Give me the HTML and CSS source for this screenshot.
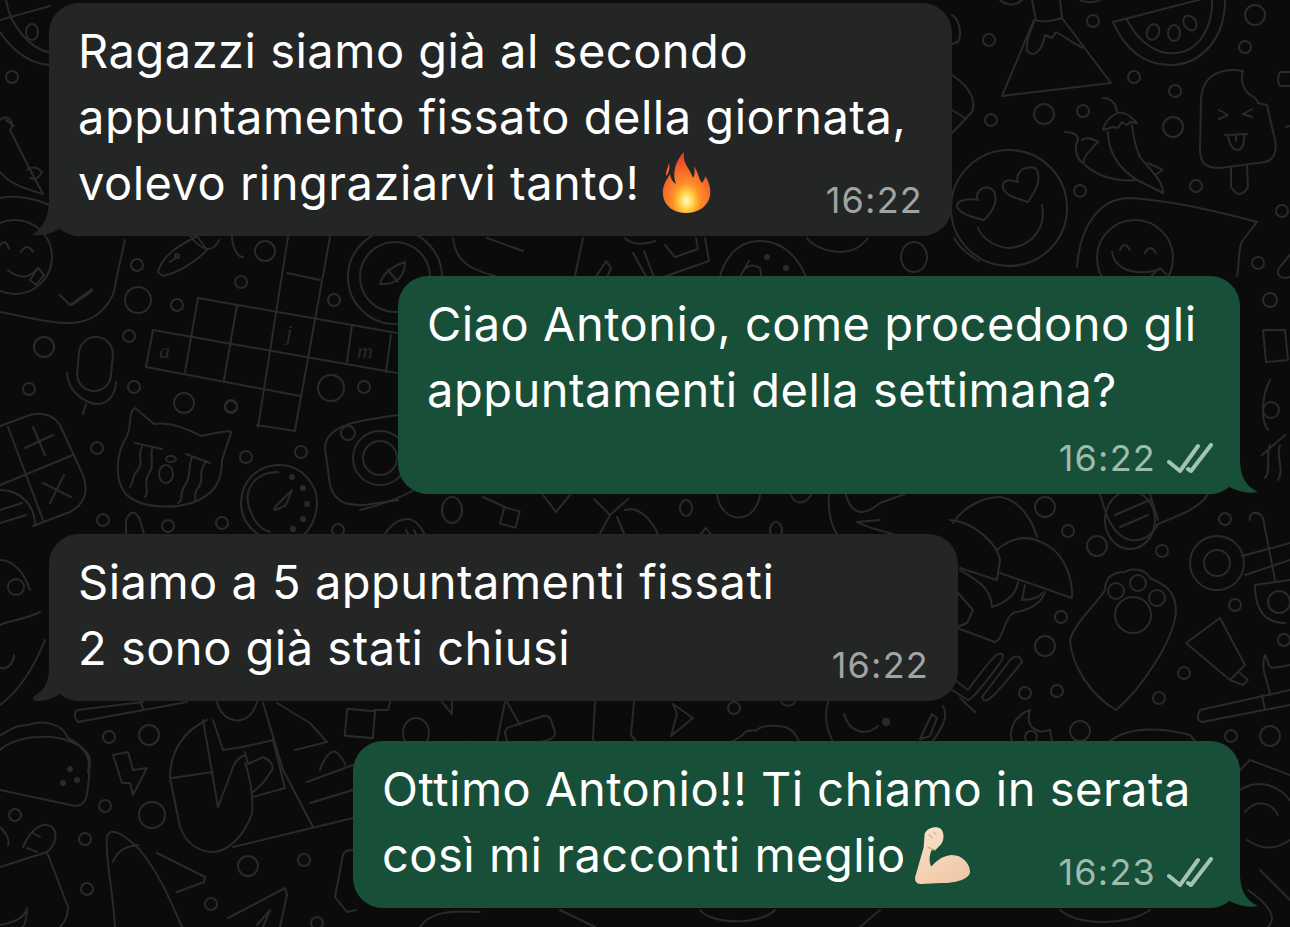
FILE: index.html
```html
<!DOCTYPE html>
<html lang="it">
<head>
    <meta charset="UTF-8">
    <meta name="viewport" content="width=device-width, initial-scale=1.0">
    <title>Chat</title>
    <link rel="stylesheet" href="styles.css">
</head>
<body>
    <svg class="wallpaper" viewBox="0 0 1290 927" aria-hidden="true">
        <!-- left edge, top -->
        <path d="M0 20 L50 6 M0 32 C15 55 35 65 52 65 M6 0 C10 25 30 50 52 53"/>
        <ellipse cx="32" cy="32" rx="6" ry="8"/>
        <circle cx="12" cy="77" r="6"/>
        <path d="M0 120 C10 112 15 125 10 130 C20 150 30 170 43 194 C30 190 10 185 0 172 M14 126 L6 120 M0 198 C15 195 35 198 49 205"/>
        <path d="M27 170 C35 164 40 170 42 172 C38 180 34 180 30 178"/>
        <!-- smiley with tongue -->
        <circle cx="15" cy="257" r="37"/>
        <path d="M0 245 Q6 238 9 249 M21 252 Q27 242 33 252 M8 270 C20 280 30 278 38 268 M30 280 L38 268 L44 275 L36 285 Z"/>
        <!-- big bubble with ticks -->
        <path d="M0 312 C30 318 50 323 70 323 C100 322 115 300 116 280 L125 240"/>
        <path d="M60 295 L70 305 L92 289 M72 305 L92 291"/>
        <!-- pen -->
        <path d="M158 272 C162 255 180 245 197 236 L207 250 C195 262 180 272 163 276 Z M170 262 L179 256 M190 236 C205 255 215 250 219 240 M232 237 C233 250 238 257 243 257"/>
        <circle cx="177" cy="256" r="2"/>
        <!-- crossword -->
        <path d="M198 298 L397 333 M153 330 L397 373 M146 367 L300 396 M153 330 L146 367 M198 298 L185 372 M237 305 L224 380 M288 237 L258 427 M330 237 L295 430 M287 273 L320 280 M257 425 L295 431 M352 325 L347 362 M391 335 L386 372"/>
        <text class="doodle-letter" x="159" y="358">a</text>
        <text class="doodle-letter" x="286" y="340">j</text>
        <text class="doodle-letter" x="357" y="358">m</text>
        <!-- mic -->
        <rect x="78" y="337" width="34" height="54" rx="17" transform="rotate(5 95 364)"/>
        <path d="M67 373 C68 395 90 405 100 404 C110 402 116 392 116 382 M86 404 L83 414"/>
        <!-- circles, left -->
        <circle cx="137" cy="265" r="6"/><circle cx="138" cy="300" r="13"/><circle cx="177" cy="305" r="6"/>
        <circle cx="129" cy="336" r="6"/><circle cx="44" cy="347" r="10"/><circle cx="29" cy="389" r="6"/>
        <circle cx="134" cy="387" r="6"/><circle cx="184" cy="403" r="10"/><circle cx="231" cy="407" r="6"/>
        <circle cx="241" cy="282" r="6"/><circle cx="265" cy="251" r="10"/><circle cx="334" cy="300" r="6"/>
        <circle cx="331" cy="388" r="13"/><circle cx="364" cy="387" r="6"/>
        <!-- compass -->
        <circle cx="395" cy="277" r="47"/><circle cx="395" cy="277" r="35"/>
        <path d="M380 284 C383 272 395 265 405 262 C405 275 398 285 380 284 Z M388 270 L398 282"/>
        <!-- calculator -->
        <path d="M0 426 L30 415 Q50 410 60 425 L83 475 Q92 500 70 512 L33 526 M8 427 L43 520 M0 485 L73 455 M25 448 L53 435 M33 427 L45 455 M43 483 L71 497 M64 475 L50 503 M0 510 L22 503 M0 523 L26 515 M0 490 C20 490 35 505 35 525"/>
        <!-- cat -->
        <path d="M135 408 C128 412 132 425 127 436 C115 455 115 480 125 493 C140 510 175 508 192 503 C212 495 222 485 222 460 L231 433 C232 430 225 431 201 436 C180 425 165 422 154 424 Z"/>
        <path d="M135 443 L162 449 M142 447 C136 458 146 462 136 472 C130 482 135 480 130 487 M152 449 C150 462 155 465 148 475 C143 485 150 490 145 497 M186 454 L210 463 M192 457 C187 470 192 475 185 485 C178 495 185 498 178 503 M205 463 C197 475 205 480 198 488 C192 495 198 498 194 502"/>
        <ellipse cx="166" cy="474" rx="7" ry="9"/>
        <ellipse cx="171" cy="459" rx="5" ry="3"/>
        <!-- gauge -->
        <path d="M278 472 C255 472 242 490 250 510 C255 525 262 530 270 532"/>
        <path d="M262 537 C248 528 241 518 241 502 C242 480 258 465 280 465 C302 465 317 485 317 502 C317 518 310 530 302 536"/>
        <path d="M292 490 L276 506 Q272 512 278 509 L286 505 Z"/>
        <circle class="doodle-dot" cx="292" cy="477" r="3"/><circle class="doodle-dot" cx="303" cy="488" r="3"/>
        <circle class="doodle-dot" cx="307" cy="504" r="3"/><circle class="doodle-dot" cx="303" cy="519" r="3"/><circle class="doodle-dot" cx="293" cy="529" r="3"/>
        <circle cx="97" cy="448" r="6"/><circle cx="246" cy="457" r="6"/><circle cx="301" cy="452" r="6"/>
        <circle cx="103" cy="520" r="6"/><circle cx="168" cy="526" r="6"/><circle cx="222" cy="523" r="6"/>
        <circle cx="338" cy="530" r="6"/><circle cx="231" cy="406" r="6"/>
        <path d="M126 534 L126 520 Q133 505 140 520 L144 534"/>
        <!-- camera -->
        <path d="M398 415 C360 420 325 425 325 448 L330 485 C335 505 350 505 365 505 L398 500"/>
        <circle cx="380" cy="458" r="27"/><circle cx="380" cy="458" r="17"/><circle cx="348" cy="433" r="7"/>
        <!-- left edge, middle -->
        <circle cx="16" cy="587" r="8"/>
        <path d="M0 560 C15 560 25 575 30 590 M0 625 C10 620 25 620 40 612 M45 640 C35 665 20 690 0 705 M0 668 C10 670 14 660 14 655"/>
        <!-- taco -->
        <path d="M0 790 L75 806 C88 806 88 795 90 760 C88 745 60 735 40 737 C20 737 5 745 0 750"/>
        <path d="M0 735 C5 735 10 725 28 725 C40 720 62 722 68 738 C82 745 92 755 88 772"/>
        <circle class="doodle-dot" cx="70" cy="769" r="3"/><circle class="doodle-dot" cx="63" cy="783" r="3"/><circle class="doodle-dot" cx="77" cy="780" r="3"/>
        <!-- bolt -->
        <path d="M113 755 L128 752 L133 770 L147 768 L133 795 L130 783 L122 783 Z"/>
        <circle cx="109" cy="737" r="6"/><circle cx="149" cy="735" r="10"/><circle cx="105" cy="806" r="6"/>
        <circle cx="152" cy="815" r="13"/><circle cx="15" cy="815" r="6"/><circle cx="85" cy="839" r="6"/>
        <circle cx="87" cy="889" r="6"/><circle cx="211" cy="904" r="6"/><circle cx="248" cy="866" r="10"/>
        <circle cx="304" cy="860" r="6"/><circle cx="317" cy="923" r="6"/>
        <!-- person with phone -->
        <path d="M187 702 L78 722 Q72 715 77 710 L143 702 M140 702 L143 708"/>
        <path d="M217 702 C222 725 250 728 257 702"/>
        <path d="M207 720 C185 730 170 750 170 778 L180 827 C187 845 200 852 213 852 C228 852 245 835 252 813 C254 795 248 770 245 763"/>
        <path d="M172 778 L213 772 M203 720 L218 807 L232 770 C234 762 238 758 245 755 M213 720 L223 750 L243 747 L273 740 L285 788 L253 797"/>
        <path d="M245 752 L248 764 L263 757 C270 760 274 765 272 770 L263 783 L253 792"/>
        <path d="M263 703 L283 770 L313 827 M277 703 L310 723 L327 742 L295 750 M233 847 L353 818 M307 782 L353 765 M310 803 L353 790 M320 770 C325 755 332 750 336 752 C340 755 345 762 345 765"/>
        <rect x="346" y="710" width="28" height="27" transform="rotate(5 360 723)"/>
        <path d="M374 710 L388 710 L390 702"/>
        <!-- notebook and loaf -->
        <path d="M0 867 L47 852 L68 907 C68 915 65 922 60 927 M23 847 C30 830 43 820 52 827 C58 833 56 845 47 852 M27 848 L37 852 M33 833 L40 837 M0 827 C8 835 10 840 8 845"/>
        <path d="M0 925 C15 922 25 918 27 908 C27 915 25 927 22 927"/>
        <!-- rocket -->
        <path d="M107 837 C110 825 125 835 140 850 C160 875 170 900 182 927 M107 837 C105 860 112 880 115 927 M113 862 C117 850 128 846 138 845 M157 853 L205 877 L204 882 L177 892"/>
        <path d="M228 918 L285 888 L287 895 L280 927 M257 925 L270 910 L263 927"/>
        <!-- comment bubble -->
        <path d="M353 850 C345 850 343 852 342 860 L335 897 L347 912 L356 910"/>
        <!-- gap under first bubble -->
        <path d="M453 238 C456 268 480 272 510 280 M487 238 L523 251 M583 238 L575 276 M594 280 L606 261 L611 268 L606 280"/>
        <path d="M625 238 C632 245 644 245 655 241 M633 253 L648 280 M644 251 L655 280 M655 280 L709 261 L705 238 M665 245 L675 257 L698 249 L696 238"/>
        <path d="M719 280 C725 255 740 241 759 241 C785 241 800 260 807 280 M740 280 C742 268 750 262 760 268 L762 280 M749 261 L738 280"/>
        <circle class="doodle-dot" cx="767" cy="257" r="3"/><circle class="doodle-dot" cx="786" cy="268" r="3"/>
        <path d="M807 238 C815 250 850 262 868 238"/>
        <ellipse cx="914" cy="257" rx="13" ry="15"/>
        <path d="M954 238 C960 248 970 256 979 261"/>
        <!-- gap under second bubble -->
        <path d="M360 510 C380 505 400 498 414 490"/>
        <ellipse cx="452" cy="510" rx="10" ry="13"/>
        <path d="M483 497 L507 508"/>
        <rect x="502" y="509" width="16" height="17" transform="rotate(15 510 517)"/>
        <path d="M543 495 L556 512 L570 495 M594 499 L610 515 L628 499 M610 515 L597 539 L590 548 M617 517 L630 548 M625 510 C640 505 659 525 661 548"/>
        <path d="M378 548 C385 530 395 519 408 519 C415 519 422 528 425 535 M406 530 L410 538 M414 530 L418 538"/>
        <path d="M476 548 C478 538 490 538 493 548 M530 548 L540 544 M544 548 C546 540 558 540 560 548 M688 548 L706 528 L713 537 L717 548"/>
        <ellipse cx="686" cy="508" rx="6" ry="8"/>
        <path d="M717 495 C722 525 755 525 760 495"/>
        <ellipse cx="776" cy="530" rx="6" ry="8"/>
        <path d="M791 495 C795 505 805 505 811 495"/>
        <path d="M829 495 C827 520 835 535 846 546 M846 495 C850 510 860 520 880 503 L905 494 M880 520 L857 522 C870 530 905 535 907 540 L895 546"/>
        <!-- gap under third bubble -->
        <ellipse cx="416" cy="733" rx="13" ry="15"/>
        <path d="M442 702 L452 714 L452 702 M505 702 L495 751 M507 702 L520 725 M546 743 L552 751 M454 751 C462 742 470 738 480 745 C490 745 497 748 500 751"/>
        <rect x="506" y="721" width="48" height="24" rx="6" transform="rotate(-18 530 733)"/>
        <path d="M595 702 L593 739 L599 751 M634 702 L631 735 L644 751 M673 704 L693 718 L671 736 L677 714 Z"/>
        <circle cx="734" cy="708" r="6"/>
        <path d="M781 702 C785 707 792 707 795 702"/>
        <path d="M720 751 C730 740 742 738 744 733 C748 728 755 732 757 730 C762 725 775 725 785 727 C795 730 801 742 801 751"/>
        <path d="M828 702 C823 720 828 738 840 751 M844 714 C850 735 868 735 878 726"/>
        <circle class="doodle-dot" cx="886" cy="722" r="4"/>
        <path d="M932 714 L920 739 L930 736 L937 718 Z M943 706 C948 715 945 725 930 745 C925 750 915 751 905 751 M960 698 L975 712"/>
        <!-- bottom strip -->
        <path d="M420 927 C430 912 450 910 480 912 M560 910 L595 927 M700 910 C712 925 760 925 775 910 M880 910 L860 927 M1060 910 C1080 927 1130 925 1150 910"/>
        <!-- mountain -->
        <path d="M1002 96 L1111 83 L1062 18 C1050 22 1040 22 1034 20 Z M1032 0 L1036 20 M1060 0 L1062 18"/>
        <path d="M1034 22 C1028 35 1025 48 1028 52 C1035 58 1042 50 1045 35 L1052 38 L1056 32 L1066 38 C1075 45 1085 48 1082 48"/>
        <!-- watermelon -->
        <path d="M1113 22 L1210 -3 M1113 22 C1125 50 1145 65 1170 65 C1200 65 1225 40 1225 0 M1127 20 C1140 45 1160 55 1175 53 C1200 52 1213 25 1212 0"/>
        <ellipse cx="1153" cy="32" rx="6" ry="8" transform="rotate(20 1153 32)"/>
        <ellipse cx="1174" cy="33" rx="6" ry="8"/>
        <ellipse cx="1190" cy="23" rx="6" ry="8" transform="rotate(-35 1190 23)"/>
        <circle cx="989" cy="40" r="6"/><circle cx="1093" cy="21" r="6"/><circle cx="1134" cy="77" r="6"/>
        <circle cx="1175" cy="91" r="6"/><circle cx="1255" cy="15" r="10"/><circle cx="1245" cy="47" r="6"/>
        <circle cx="991" cy="120" r="6"/><circle cx="1044" cy="114" r="10"/><circle cx="1083" cy="111" r="6"/>
        <circle cx="1173" cy="127" r="10"/><circle cx="1196" cy="186" r="6"/><circle cx="1080" cy="191" r="6"/>
        <circle cx="1282" cy="211" r="6"/><circle cx="1258" cy="263" r="6"/>
        <path d="M952 15 C960 20 962 35 958 42 L952 44 M952 75 C975 90 975 105 972 112 L952 133 M952 110 L965 118"/>
        <path d="M1000 0 C1005 5 1015 7 1022 0 M1080 0 C1085 3 1095 3 1100 0"/>
        <!-- popsicle -->
        <path d="M1243 71 C1225 68 1202 72 1201 100 L1200 150 C1200 165 1208 168 1220 168 L1265 162 C1275 160 1277 150 1275 140 L1267 105 L1258 103 C1256 95 1250 97 1247 92 C1241 85 1241 78 1243 71 Z"/>
        <path d="M1231 168 L1231 187 Q1240 201 1248 187 L1247 166 M1219 110 L1228 115 L1219 119 M1252 109 L1243 114 L1252 117 M1225 135 L1247 134 M1228 135 Q1230 150 1238 150 Q1245 148 1244 135 M1236 136 L1236 141"/>
        <path d="M1290 72 L1280 72 Q1276 80 1280 86 L1290 86 M1290 126 L1286 127"/>
        <!-- face with hearts -->
        <circle cx="1009" cy="208" r="58"/>
        <path d="M1038 174 C1038 168 1033 166 1026 168 C1018 170 1016 178 1018 182 C1006 178 1002 182 1003 188 C1005 195 1015 198 1028 202 C1036 190 1040 182 1038 174 Z"/>
        <path d="M995 195 C995 188 985 185 980 190 C975 195 977 198 978 200 C968 198 957 200 957 206 C958 212 970 217 984 220 C992 212 997 203 995 195 Z"/>
        <path d="M1042 205 C1046 225 1035 245 1010 248 C995 248 982 238 978 228"/>
        <!-- chili -->
        <path d="M1103 98 C1112 98 1117 105 1117 113 C1108 118 1104 124 1103 130 L1113 127 L1118 128 L1122 122 L1127 125 L1130 122 L1137 123 C1130 115 1123 111 1117 113"/>
        <path d="M1108 132 C1108 150 1117 167 1137 180 L1163 193 C1163 180 1150 170 1140 157 C1135 147 1133 133 1132 125 M1148 163 L1163 170 L1155 175"/>
        <path d="M1065 132 C1075 132 1078 135 1078 140 C1073 150 1078 160 1083 163 C1085 153 1090 152 1093 147 L1098 142 C1090 137 1085 138 1082 140 M1083 163 C1097 177 1117 182 1137 180"/>
        <!-- smile blob -->
        <path d="M1077 267 C1080 225 1100 198 1130 198 C1170 200 1220 212 1257 222 L1243 240 C1238 245 1240 260 1237 276"/>
        <circle cx="1135" cy="258" r="38"/>
        <path d="M1120 250 Q1124 240 1130 250 M1145 253 Q1150 243 1156 253 M1112 252 C1115 270 1135 276 1158 270 M1152 275 L1160 268 L1166 274"/>
        <path d="M1279 268 L1290 255 M1279 268 C1275 275 1282 280 1290 277"/>
        <!-- right edge, middle -->
        <circle cx="1270" cy="300" r="7"/>
        <path d="M1263 330 L1285 330 L1288 360 L1266 362 Z M1270 380 C1262 395 1260 420 1268 430 M1262 455 L1285 435 M1270 445 C1265 455 1272 470 1265 478 M1280 445 C1275 455 1285 470 1278 480"/>
        <circle cx="1271" cy="410" r="8"/>
        <!-- domes -->
        <path d="M953 523 C965 505 985 497 1000 497 C1020 500 1032 520 1037 537 M950 520 C975 522 998 545 1000 560 L997 580 L960 568 M997 550 C1012 537 1030 533 1050 547 C1065 557 1073 580 1072 598 L1000 573"/>
        <path d="M960 570 C975 580 990 585 992 607 C1005 603 1016 595 1018 582 M1025 585 L1022 600 C1032 600 1040 597 1042 593 M1045 592 C1040 607 1025 610 1013 613 C1005 618 1003 635 998 640 L995 642 L957 628 M958 593 L973 610 L967 623 L957 627"/>
        <circle cx="1045" cy="507" r="10"/><circle cx="1068" cy="531" r="6"/><circle cx="1061" cy="617" r="6"/>
        <circle cx="1045" cy="646" r="10"/><circle cx="1097" cy="546" r="10"/><circle cx="1162" cy="551" r="6"/>
        <circle cx="1225" cy="519" r="6"/><circle cx="1235" cy="605" r="6"/><circle cx="1184" cy="673" r="6"/>
        <circle cx="1159" cy="698" r="6"/><circle cx="1025" cy="693" r="6"/><circle cx="1057" cy="691" r="6"/>
        <circle cx="1080" cy="731" r="10"/><circle cx="1031" cy="737" r="6"/><circle cx="1231" cy="736" r="6"/>
        <circle cx="1270" cy="736" r="10"/><circle cx="1284" cy="640" r="6"/>
        <!-- paw -->
        <path d="M1070 641 C1072 625 1100 600 1105 590 C1105 575 1115 572 1125 572 C1130 568 1145 568 1150 578 C1165 585 1175 590 1176 610 C1175 640 1140 690 1116 710 C1090 695 1072 665 1070 641 Z"/>
        <circle cx="1133" cy="615" r="18"/><circle cx="1116" cy="591" r="8"/><circle cx="1138" cy="583" r="8"/><circle cx="1157" cy="598" r="8"/>
        <path d="M1100 494 C1105 510 1110 535 1130 540 C1148 542 1155 530 1158 524 C1180 515 1200 508 1208 494 M1115 515 L1150 500 M1120 527 L1148 515 M1150 494 L1158 520"/>
        <ellipse cx="1130" cy="520" rx="25" ry="29"/>
        <!-- scissors -->
        <circle cx="1217" cy="563" r="27"/><circle cx="1217" cy="563" r="13"/>
        <path d="M1242 556 L1290 543 M1245 575 L1290 560 M1250 520 C1248 512 1258 510 1263 518 L1275 580 M1255 585 C1255 610 1265 623 1285 623 M1255 585 L1290 580"/>
        <circle cx="1279" cy="602" r="11"/>
        <!-- tube -->
        <path d="M1186 643 L1220 618 L1245 665 L1230 680 Z M1230 680 L1243 685 L1248 680 L1240 673"/>
        <path d="M1265 655 L1268 662 C1268 670 1275 668 1290 665 M1265 655 C1260 670 1268 680 1270 695 M1290 690 L1200 710 Q1195 720 1202 722 L1290 705 M1262 695 L1265 710"/>
        <!-- ticks -->
        <path d="M952 690 L968 700 C972 700 1005 660 1003 655 C998 650 990 660 968 690 L955 680 M982 697 C985 705 990 702 1022 662 C1020 655 1015 655 1010 660 L982 697"/>
        <path d="M1030 710 C1015 715 1008 730 1012 741 M1030 710 C1025 725 1035 735 1050 730 L1052 741"/>
        <path d="M1110 741 C1125 730 1150 725 1190 735 L1195 741"/>
        <!-- bottom right -->
        <path d="M1240 770 L1250 760 L1290 775 M1240 790 C1255 780 1275 782 1290 800 M1245 812 C1255 800 1270 800 1278 815 M1247 840 C1262 850 1275 850 1290 840 M1260 870 L1290 900 M1248 890 C1262 900 1280 915 1268 927"/>
    </svg>

    <main class="chat">
        <div class="bubble incoming bubble-first">
            <svg class="tail" viewBox="0 0 50 60"><path d="M20 0 L20 25 C20 45 10 55 3 59 C15 60 25 57 33 51 C38 58 45 60 50 60 L50 0 Z"/></svg>
            <p class="text">Ragazzi siamo già al secondo<br>appuntamento fissato della giornata,<br>volevo ringraziarvi tanto!<svg class="emoji fire" viewBox="0 0 50 64">
                <defs>
                    <radialGradient id="fireGlow" cx="50%" cy="80%" r="72%">
                        <stop offset="0" stop-color="#fffbd0"/>
                        <stop offset="0.18" stop-color="#ffd84a"/>
                        <stop offset="0.4" stop-color="#ff8f28"/>
                        <stop offset="1" stop-color="#e9452a"/>
                    </radialGradient>
                </defs>
                <path fill="url(#fireGlow)" d="M23 2 C21 14 29 18 32 28 C34 24 34 22 33 16 C38 24 38 30 41 33 C43 30 44 29 44 26 C49 33 50 40 49 46 C47 57 36 63 25 63 C13 63 3 56 2 45 C1 36 5 31 9 24 C10 30 12 32 15 34 C11 24 14 11 23 2 Z"/>
                <path fill="#ff6a2c" d="M8 13 C7 18 5 20 5 26 C8 23 9 18 8 13 Z"/>
            </svg></p>
            <span class="meta">16:22</span>
        </div>

        <div class="bubble outgoing bubble-second">
            <svg class="tail" viewBox="0 0 50 60"><path d="M32 0 L32 25 C32 45 40 53 50 58 C40 60 28 57 20 52 C14 58 8 60 0 60 L0 0 Z"/></svg>
            <p class="text">Ciao Antonio, come procedono gli<br>appuntamenti della settimana?</p>
            <span class="meta meta-below">16:22<svg class="ticks" viewBox="0 0 46 30"><path d="M2 19 L13 28 L31 3 M21 26 L24 28 L44 2"/></svg></span>
        </div>

        <div class="bubble incoming bubble-third">
            <svg class="tail" viewBox="0 0 50 60"><path d="M20 0 L20 28 C20 42 14 50 7 54 C3 56 3 60 8 60 C18 60 26 57 33 51 C38 58 45 60 50 60 L50 0 Z"/></svg>
            <p class="text">Siamo a 5 appuntamenti fissati<br>2 sono già stati chiusi</p>
            <span class="meta">16:22</span>
        </div>

        <div class="bubble outgoing bubble-fourth">
            <svg class="tail" viewBox="0 0 50 60"><path d="M32 0 L32 25 C32 45 40 53 50 58 C40 60 28 57 20 52 C14 58 8 60 0 60 L0 0 Z"/></svg>
            <p class="text">Ottimo Antonio!! Ti chiamo in serata<br>così mi racconti meglio<svg class="emoji arm" viewBox="0 0 57 60">
                <defs>
                    <linearGradient id="armSkin" x1="0" y1="0" x2="0.6" y2="1">
                        <stop offset="0" stop-color="#f9e3cd"/>
                        <stop offset="1" stop-color="#f0c9a8"/>
                    </linearGradient>
                </defs>
                <path fill="url(#armSkin)" d="M10 8 C12 2 22 -1 27 3 C31 8 30 16 26 20 L21 25 L17 25 C15 30 14 38 17 42 C22 36 28 31 38 30 C50 30 57 40 57 47 C57 55 42 59 28 59 L6 60 C0 60 -1 55 1 50 L9 22 Z"/>
                <path fill="none" stroke="#c98f6c" stroke-width="1" d="M14 9 L18 12 M19 6 L22 9 M13 22 L21 25"/>
            </svg></p>
            <span class="meta">16:23<svg class="ticks" viewBox="0 0 46 30"><path d="M2 19 L13 28 L31 3 M21 26 L24 28 L44 2"/></svg></span>
        </div>
    </main>
</body>
</html>
```

FILE: styles.css
```css
html, body {
    margin: 0;
    height: 100%;
    overflow: hidden;
}
body {
    position: relative;
    background-color: #0b0b0b;
    font-family: Inter, 'Noto Sans', sans-serif;
}
.wallpaper {
    position: absolute;
    top: 0;
    left: 0;
    width: 1290px;
    height: 927px;
    fill: none;
    stroke: #2a2a2a;
    stroke-width: 2;
    stroke-linecap: round;
    stroke-linejoin: round;
}
.doodle-dot {
    fill: #2a2a2a;
    stroke: none;
}
.doodle-letter {
    fill: #2a2a2a;
    stroke: none;
    font-family: 'Liberation Serif', serif;
    font-style: italic;
    font-size: 22px;
}
.chat {
    position: relative;
    display: flex;
    flex-direction: column;
    gap: 40px;
    padding-top: 3px;
}
.bubble {
    position: relative;
    display: grid;
    box-sizing: border-box;
    padding: 15px 0 20px 29px;
    border-radius: 30px;
}
.incoming {
    align-self: flex-start;
    margin-left: 49px;
    background-color: #242626;
    fill: #242626;
}
.outgoing {
    align-self: flex-end;
    margin-right: 50px;
    background-color: #174f38;
    fill: #174f38;
}
.bubble-first { width: 903px; }
.bubble-second { width: 842px; }
.bubble-third { width: 909px; }
.bubble-fourth { width: 887px; }
.tail {
    position: absolute;
    bottom: 0;
    width: 50px;
    height: 60px;
}
.incoming .tail { left: -20px; }
.outgoing .tail { right: -18px; }
.text {
    grid-area: 1 / 1;
    position: relative;
    margin: 0;
    color: #fff;
    font-size: 47px;
    letter-spacing: 0.5px;
    line-height: 66px;
    white-space: nowrap;
}
.meta {
    grid-area: 1 / 1;
    position: relative;
    display: flex;
    align-items: center;
    gap: 11px;
    align-self: end;
    justify-self: end;
    height: 30px;
    margin-right: 29px;
    margin-bottom: 1px;
    font-size: 36px;
    letter-spacing: 1.2px;
}
.incoming .meta { color: #a1a4a4; }
.outgoing .meta {
    margin-right: 27px;
    color: #9dbcae;
}
.meta-below {
    grid-area: 2 / 1;
    margin-top: 20px;
}
.ticks {
    width: 46px;
    height: 30px;
    fill: none;
    stroke: #a5c3b5;
    stroke-width: 4;
    stroke-linecap: round;
    stroke-linejoin: round;
}
.fire {
    width: 52px;
    height: 64px;
    margin: -20px 0 -20px 20px;
    vertical-align: 6px;
}
.arm {
    width: 55px;
    height: 60px;
    margin: -20px 0 -20px 9px;
    vertical-align: 7px;
}
```
